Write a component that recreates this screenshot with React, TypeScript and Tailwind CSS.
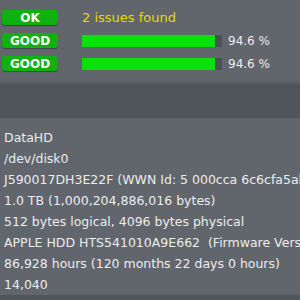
import React from 'react';

const font = { fontFamily: '"DejaVu Sans", Verdana, sans-serif' };

const Badge: React.FC<{ label: string }> = ({ label }) => (
  <div className="w-[56px] h-[15px] rounded-[3px] bg-[#10b010] shadow-[0_1px_1px_rgba(0,0,0,0.35)] flex items-center justify-center text-white font-bold text-[12px] leading-none">
    {label}
  </div>
);

const BarRow: React.FC<{ pct: number }> = ({ pct }) => (
  <div className="flex items-center h-[15px]">
    <Badge label="GOOD" />
    <div className="ml-[24px] w-[140px] h-[12px] bg-[#4b5056]">
      <div className="h-full bg-[#0ae00a]" style={{ width: `${(133 / 140) * 100}%` }} />
    </div>
    <span className="ml-[6px] text-[12px] text-[#eeeeee]">{pct.toFixed(1)} %</span>
  </div>
);

const lines = [
  'DataHD',
  '/dev/disk0',
  'J590017DH3E22F (WWN Id: 5 000cca 6c6cfa5ab3)',
  '1.0 TB (1,000,204,886,016 bytes)',
  '512 bytes logical, 4096 bytes physical',
  'APPLE HDD HTS541010A9E662\u00a0\u00a0(Firmware Version: JA0AB5N0)',
  '86,928 hours (120 months 22 days 0 hours)',
  '14,040',
];

export default function App() {
  return (
    <div className="w-[300px] h-[300px] overflow-hidden bg-[#61666c] flex flex-col" style={font}>
      <div className="flex flex-col gap-[8px] pl-[2px] pt-[10px] h-[82px] shrink-0">
        <div className="flex items-center h-[15px]">
          <Badge label="OK" />
          <span className="ml-[24px] text-[13px] text-[#e8da00]">2 issues found</span>
        </div>
        <BarRow pct={94.6} />
        <BarRow pct={94.6} />
      </div>
      <div className="h-[2px] bg-[#575c62] shrink-0" />
      <div className="h-[34px] bg-[#50555b] shrink-0" />
      <div className="flex-1 min-h-0 overflow-hidden flex flex-col pl-[4px] pt-[9px] text-[12.5px] leading-[21px] text-[#ececec] whitespace-nowrap">
        {lines.map((l, i) => (
          <div key={i}>{l}</div>
        ))}
      </div>
      <div className="h-[5px] bg-[#50555b] shrink-0" />
    </div>
  );
}
